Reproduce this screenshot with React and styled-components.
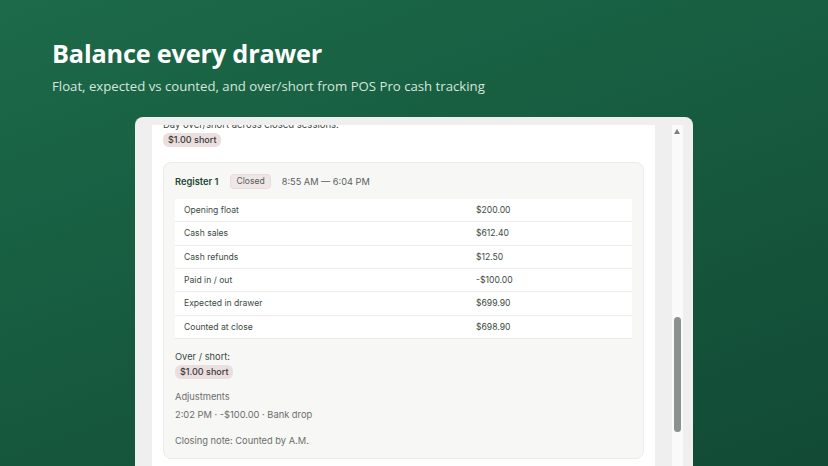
import React from 'react';
import styled, {createGlobalStyle} from 'styled-components';

const GlobalStyle = createGlobalStyle`
    html, body {
        margin: 0;
        padding: 0;
        overflow: hidden;
    }
`;

const rows = [
    ['Opening float', '$200.00'],
    ['Cash sales', '$612.40'],
    ['Cash refunds', '$12.50'],
    ['Paid in / out', '-$100.00'],
    ['Expected in drawer', '$699.90'],
    ['Counted at close', '$698.90'],
];

export default function App() {
    return (
        <Page>
            <GlobalStyle/>
            <Title>Balance every drawer</Title>
            <Subtitle>Float, expected vs counted, and over/short from POS Pro cash tracking</Subtitle>

            <Window>
                <Viewport>
                    <Scrolled>
                        <Summary>Day over/short across closed sessions.</Summary>
                        <Pill $top={2}>$1.00 short</Pill>

                        <Card>
                            <CardHeader>
                                <RegisterName>Register 1</RegisterName>
                                <StatusTag>Closed</StatusTag>
                                <TimeRange>8:55 AM — 6:04 PM</TimeRange>
                            </CardHeader>

                            <Table>
                                {rows.map(([label, value]) => (
                                    <Row key={label}>
                                        <Cell>{label}</Cell>
                                        <Cell>{value}</Cell>
                                    </Row>
                                ))}
                            </Table>

                            <Label $top={11}>Over / short:</Label>
                            <Pill $top={1}>$1.00 short</Pill>

                            <Muted $top={11}>Adjustments</Muted>
                            <Muted $top={4}>2:02 PM · -$100.00 · Bank drop</Muted>
                            <Muted $top={12}>Closing note: Counted by A.M.</Muted>
                        </Card>
                    </Scrolled>
                </Viewport>
                <ScrollTrack>
                    <ArrowUp/>
                    <Thumb/>
                </ScrollTrack>
            </Window>
        </Page>
    );
}

const Page = styled.div`
    width: 828px;
    height: 466px;
    box-sizing: border-box;
    padding: 38px 0 0 52px;
    overflow: hidden;
    background: linear-gradient(160deg, #1c6a4a 0%, #175c40 45%, #124a35 100%);
    font-family: "Open Sans", "Noto Sans", sans-serif;
`;

const Title = styled.h1`
    margin: 0;
    font-size: 25.3px;
    line-height: 30px;
    font-weight: 700;
    color: #ffffff;
    letter-spacing: -0.2px;
`;

const Subtitle = styled.p`
    margin: 9px 0 0;
    font-size: 13.2px;
    line-height: 18px;
    color: #d6e6dc;
`;

const Window = styled.div`
    display: flex;
    width: 558px;
    height: 360px;
    margin: 22px 0 0 83px;
    box-sizing: border-box;
    padding: 8px 10px 0 17px;
    background: #efefef;
    border-radius: 8px 8px 0 0;
`;

const Viewport = styled.div`
    width: 503px;
    background: #ffffff;
    overflow: hidden;
    font-family: Inter, "Liberation Sans", sans-serif;
`;

const Scrolled = styled.div`
    margin-top: -6px;
    padding: 0 11px;
`;

const Summary = styled.div`
    font-size: 9.5px;
    line-height: 12px;
    color: #3e4a44;
`;

const Pill = styled.div`
    width: fit-content;
    margin-top: ${p => p.$top}px;
    padding: 0 5px;
    height: 14px;
    line-height: 14px;
    border-radius: 6px;
    background: #ebdede;
    color: #3a3a3a;
    font-size: 9px;
    font-weight: 500;
`;

const Card = styled.div`
    margin-top: 15px;
    padding: 11px 11px 10px;
    background: #f7f7f6;
    border: 1px solid #ebebe9;
    border-radius: 8px;
`;

const CardHeader = styled.div`
    display: flex;
    align-items: center;
    height: 14px;
    margin-bottom: 11px;
`;

const RegisterName = styled.span`
    font-size: 9.3px;
    font-weight: 600;
    color: #1f4634;
`;

const StatusTag = styled.span`
    margin: 0 11px 0 12px;
    padding: 0 5px;
    height: 13px;
    line-height: 13px;
    border-radius: 4px;
    background: #efe7e7;
    border: 1px solid #eadada;
    color: #5a5a5a;
    font-size: 8.6px;
`;

const TimeRange = styled.span`
    font-size: 9.2px;
    color: #5c5f5d;
`;

const Table = styled.div`
    display: flex;
    flex-direction: column;
`;

const Row = styled.div`
    display: grid;
    grid-template-columns: 292px 1fr;
    height: 23.33px;
    box-sizing: border-box;
    align-items: center;
    background: #ffffff;
    border-bottom: 1.3px solid #ececea;
`;

const Cell = styled.span`
    padding-left: 9px;
    font-size: 8.6px;
    color: #3b4a42;
`;

const Label = styled.div`
    margin-top: ${p => p.$top}px;
    font-size: 9.3px;
    line-height: 14px;
    color: #3b4a42;
`;

const Muted = styled.div`
    margin-top: ${p => p.$top}px;
    font-size: 9.3px;
    line-height: 14px;
    color: #6a6e6b;
`;

const ScrollTrack = styled.div`
    position: relative;
    width: 11px;
    margin-left: 17px;
    background: #fafafa;
`;

const ArrowUp = styled.div`
    position: absolute;
    top: 4px;
    left: 2px;
    width: 0;
    height: 0;
    border-left: 3.5px solid transparent;
    border-right: 3.5px solid transparent;
    border-bottom: 5px solid #7c817f;
`;

const Thumb = styled.div`
    position: absolute;
    top: 192px;
    left: 2px;
    width: 7px;
    height: 115px;
    border-radius: 4px;
    background: #8a918e;
`;
